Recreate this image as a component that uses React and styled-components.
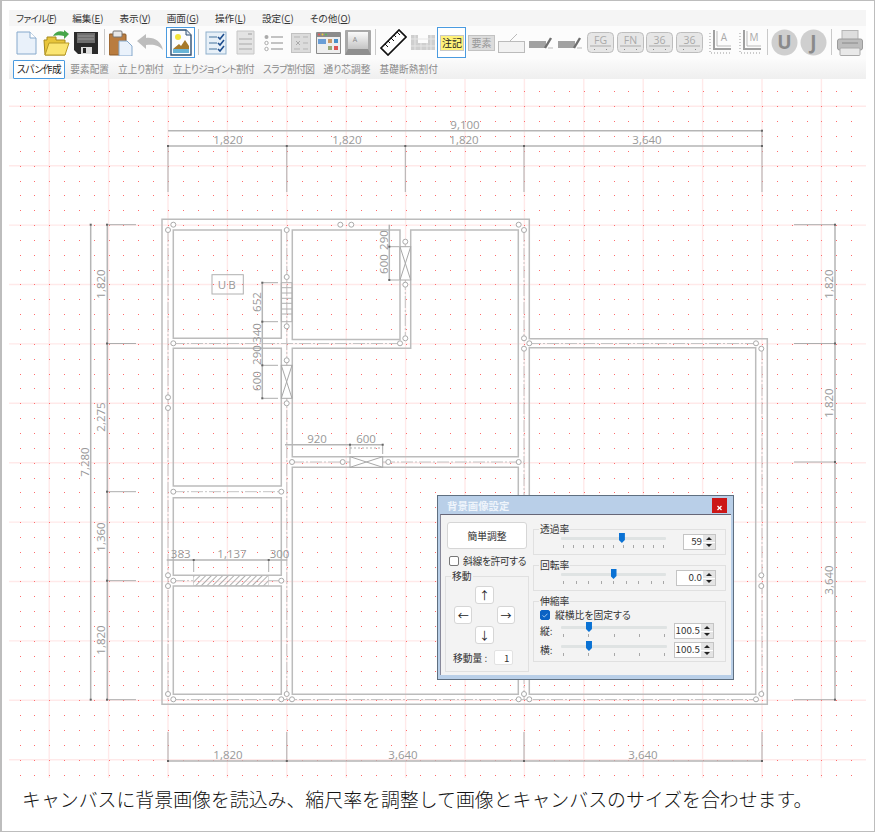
import React from "react";
import styled, { createGlobalStyle } from "styled-components";

const GlobalStyle = createGlobalStyle`
    html, body {
        margin: 0;
        background: #fff;
    }
    body {
        font-family: "Noto Sans CJK JP", "Noto Sans", sans-serif;
        font-feature-settings: "palt";
    }
`;

const Frame = styled.div`
    box-sizing: border-box;
    width: 875px;
    height: 832px;
    padding: 9px 8px 0 7px;
    border: 1px solid #bdbdbd;
    border-left-width: 2px;
    background: #fff;
`;

const MenuBar = styled.div`
    display: flex;
    gap: 16px;
    height: 16px;
    padding-left: 7px;
    align-items: center;
    background: #f5f5f5;
    font-size: 9.6px;
    color: #333;
`;

const MenuItem = styled.span`
    letter-spacing: ${(p) => p.$tight || 0}px;
`;

const ToolBar = styled.div`
    display: flex;
    height: 33px;
    padding-left: 3px;
    background: #fcfcfc;
    overflow: hidden;
`;

const Tool = styled.div`
    box-sizing: border-box;
    flex: 0 0 ${(p) => p.$w}px;
    height: 31px;
    margin-top: 1px;
    display: flex;
    align-items: center;
    justify-content: center;
    border: 1px solid ${(p) => (p.$on ? "#4a9be0" : "transparent")};
    background: ${(p) => (p.$on ? "#fff" : "transparent")};
`;

const Divider = styled.div`
    flex: 0 0 6px;
    display: flex;
    justify-content: center;
    &::before {
        content: "";
        width: 1px;
        height: 26px;
        margin-top: 3px;
        background: #c9c9c9;
    }
`;

const NextIconEdge = styled.div`
    flex: 0 0 2px;
    height: 5px;
    margin-top: 13px;
    background: #4a9be0;
`;

const TabBar = styled.div`
    display: flex;
    gap: 7px;
    height: 20px;
    padding-left: 4px;
    align-items: center;
    background: linear-gradient(#fbfbfb, #efefef);
`;

const Tab = styled.div`
    box-sizing: border-box;
    height: 19px;
    line-height: 17px;
    padding: 0 ${(p) => (p.$active ? 3 : 0)}px;
    margin-right: ${(p) => (p.$active ? -3 : 0)}px;
    font-size: 9.7px;
    letter-spacing: ${(p) => p.$tight || 0}px;
    color: ${(p) => (p.$active ? "#222" : "#8a8a8a")};
    background: ${(p) => (p.$active ? "#fff" : "transparent")};
    border: 1px solid ${(p) => (p.$active ? "#4a9be0" : "transparent")};
    border-radius: 1px;
`;

const Canvas = styled.div`
    position: relative;
    height: 700px;
    background: #fff;
`;

const Drawing = styled.svg`
    display: block;
`;

const DimText = styled.text`
    font-family: "Open Sans", sans-serif;
    font-size: 11.5px;
    fill: #999;
    text-anchor: middle;
`;

const Caption = styled.div`
    padding: 7px 0 0 13px;
    font-size: 18.9px;
    line-height: 26px;
    font-weight: 300;
    font-feature-settings: normal;
    color: #111;
    white-space: nowrap;
`;

const Dialog = styled.div`
    position: absolute;
    left: 428px;
    top: 416px;
    box-sizing: border-box;
    width: 297px;
    height: 185px;
    display: flex;
    flex-direction: column;
    padding: 0 2px 4px 2px;
    border: 1px solid #5f6f80;
    background: #b9cfe8;
    font-size: 9.8px;
    color: #333;
`;

const TitleBar = styled.div`
    display: flex;
    align-items: center;
    justify-content: space-between;
    flex: 0 0 18px;
    padding: 0 4px 0 7px;
    font-size: 10.4px;
    font-weight: 700;
    color: #eef4fb;
`;

const CloseButton = styled.div`
    width: 15px;
    height: 15px;
    display: flex;
    align-items: flex-end;
    justify-content: center;
    background: #cc1616;
`;

const Panel = styled.div`
    flex: 1;
    display: flex;
    gap: 4px;
    padding: 7px 5px 0 4px;
    border-top: 1px solid #667;
    border-left: 1px solid #889;
    background: #f3f3f3;
`;

const LeftColumn = styled.div`
    flex: 0 0 84px;
    display: flex;
    flex-direction: column;
`;

const RightColumn = styled.div`
    flex: 1;
    display: flex;
    flex-direction: column;
    gap: 10px;
    padding-top: 7px;
`;

const PlainButton = styled.div`
    height: 27px;
    margin: 0 2px;
    display: flex;
    align-items: center;
    justify-content: center;
    background: #fff;
    border: 1px solid #d6d6d6;
    border-radius: 3px;
    box-sizing: border-box;
`;

const CheckRow = styled.div`
    display: flex;
    align-items: center;
    gap: ${(p) => p.$gap || 4}px;
    height: 10px;
    margin: ${(p) => p.$margin || "0"};
    letter-spacing: ${(p) => p.$tight || 0}px;
`;

const Check = styled.div`
    box-sizing: border-box;
    width: 10px;
    height: 10px;
    display: flex;
    align-items: center;
    justify-content: center;
    border-radius: 2px;
    border: 1px solid ${(p) => (p.$on ? "#0b62c4" : "#777")};
    background: ${(p) => (p.$on ? "#0b62c4" : "#fff")};
`;

const Group = styled.div`
    position: relative;
    box-sizing: border-box;
    height: ${(p) => p.$h}px;
    margin-top: ${(p) => p.$top || 0}px;
    padding: ${(p) => p.$pad};
    border: 1px solid #e0e0e0;
`;

const Legend = styled.div`
    position: absolute;
    top: -8px;
    left: 5px;
    padding: 0 1px;
    line-height: 14px;
    background: #f3f3f3;
`;

const ArrowPad = styled.div`
    display: grid;
    grid-template-columns: repeat(3, 18.4px);
    grid-template-rows: repeat(3, 18px);
    gap: 2px 3px;
    margin: 9px 0 0 8px;
    grid-template-areas:
        ". up ."
        "left . right"
        ". down .";
`;

const ArrowButton = styled.div`
    grid-area: ${(p) => p.$area};
    display: flex;
    align-items: center;
    justify-content: center;
    background: #fff;
    border: 1px solid #d6d6d6;
    border-radius: 3px;
    font-size: 11px;
    color: #222;
`;

const StepRow = styled.div`
    display: flex;
    align-items: center;
    gap: 7px;
    margin: 6px 0 0 7px;
`;

const StepInput = styled.div`
    box-sizing: border-box;
    width: 19px;
    height: 15px;
    line-height: 14px;
    padding-right: 3px;
    text-align: right;
    background: #fff;
    border: 1px solid #e2e2e2;
    border-radius: 2px;
`;

const SliderRow = styled.div`
    display: flex;
    align-items: flex-start;
    margin-top: ${(p) => p.$top || 0}px;
`;

const RowLabel = styled.div`
    flex: 0 0 21px;
    line-height: 16px;
`;

const Slider = styled.div`
    width: ${(p) => p.$w}px;
    margin-top: 3px;
`;

const Track = styled.div`
    position: relative;
    height: 3px;
    background: #dfe3e3;
    border-radius: 1px;
`;

const Thumb = styled.div`
    position: absolute;
    top: -4px;
    left: ${(p) => p.$at}%;
    width: 6px;
    height: 10px;
    margin-left: -3px;
    background: #0a72d4;
    clip-path: polygon(0 0, 100% 0, 100% 70%, 50% 100%, 0 70%);
`;

const Ticks = styled.div`
    display: flex;
    justify-content: space-between;
    margin: 5px 2px 0;
`;

const Tick = styled.span`
    width: 1px;
    height: 3px;
    background: #a8a8a8;
`;

const Spin = styled.div`
    box-sizing: border-box;
    flex: 0 0 auto;
    width: ${(p) => p.$w}px;
    height: 16px;
    margin-left: auto;
    display: flex;
    background: #fff;
    border: 1px solid #c4c4c4;
`;

const SpinValue = styled.div`
    flex: 1;
    text-align: right;
    padding-right: 1px;
    line-height: 13px;
`;

const SpinButtons = styled.div`
    flex: 0 0 12px;
    display: flex;
    flex-direction: column;
    gap: 1px;
`;

const SpinButton = styled.div`
    flex: 1;
    display: flex;
    align-items: center;
    justify-content: center;
    background: #e4e4e4;
    &::before {
        content: "";
        border-left: 3px solid transparent;
        border-right: 3px solid transparent;
        border-${(p) => (p.$down ? "top" : "bottom")}: 3px solid #222;
    }
`;

// canvas geometry, page coordinates
const GRID_X = Array.from({ length: 14 }, (_, i) => 49.2 + i * 59.4);
const GRID_Y = Array.from({ length: 12 }, (_, i) => 106.3 + i * 59.4);

const dotPath = () => {
    let d = "";
    for (let i = 0; i < 58; i++) {
        for (let j = 0; j < 47; j++) {
            const x = Math.round(19.5 + i * 14.85);
            const y = Math.round(91.4 + j * 14.85);
            if (x < 866 && y < 776) d += `M${x} ${y}h1v1h-1z`;
        }
    }
    return d;
};

const WALLS = [
    "M162 219.3H529.3V338.7H767.3V704.3H162Z",
    "M173.3 230H281.3V338.3H173.3Z",
    "M292.3 230H400V339.5H292.3Z",
    "M410.7 230H518.3V456.7H292.3V348.3H410.7Z",
    "M173.3 348.3H281.3V486H173.3Z",
    "M173.3 497.7H281.3V575.3H173.3Z",
    "M173.3 586H281.3V694.3H173.3Z",
    "M292.3 467.3H518.3V694.3H292.3Z",
    "M529.3 347.7H755.7V694.3H529.3Z",
];

const CHAINS = [
    "M168 230V700", "M286.8 230V700", "M524 230V338", "M524 348V700", "M405.3 242V338",
    "M762 348V694", "M173 343.5H400", "M292 462H350", "M383 462H524", "M173 491.7H281",
    "M173 580.7H193", "M269 580.7H281", "M529 343.5H756", "M173 699.5H756",
];

const NODES = [
    [173.3, 224.7], [168, 230], [286.7, 230], [340.3, 224.7], [351.3, 224.7], [405.3, 241.7], [405.3, 284.7],
    [286.7, 277], [286.7, 326.3], [405.3, 338.3], [400, 343.3], [173.3, 343.3], [168, 397.3], [168, 408],
    [286.7, 360.3], [286.7, 403.3], [292, 462], [342.7, 462], [388.3, 462], [173.3, 491.7], [281.3, 491.7],
    [168, 575.3], [168, 586], [173.3, 580.7], [281.3, 580.7], [168, 694], [286.7, 694], [173.3, 699.3],
    [281.3, 699.3], [292, 699.3], [518.7, 224.7], [524, 230], [524, 338.3], [529.3, 343.3], [524, 348.7],
    [756, 343.3], [761.3, 348.7], [518.7, 462], [761.3, 575.3], [761.3, 586], [524, 694], [518.7, 699.3],
    [529.3, 699.3], [756, 699.3], [761.3, 694],
];

const DIM_BARS = [
    "M168 130.7H762", "M168 146H762", "M168 761H762", "M90.7 224.7V700", "M107.3 224.7V700", "M835 224.7V700",
    "M166.7 560H287.3", "M285 444.7H382.7", "M262.3 282.7V398.3", "M389.3 224.7V280",
];

const DIM_TICKS = [
    "M168 146V192", "M286.8 146V192", "M405.3 146V192", "M524 146V192", "M762 130.7V192",
    "M168 732V761", "M286.8 732V761", "M524 732V761", "M762 732V761",
    "M107 224.7H136", "M107 343.5H136", "M107 491.7H136", "M107 580.7H136", "M107 699.7H136",
    "M794 224.7H835", "M794 343.5H835", "M794 462H835", "M794 699.7H835",
    "M193.7 560V572", "M268.7 560V572", "M350 444.7V454", "M382.7 444.7V454",
    "M262.3 282.7H278", "M262.3 321.7H278", "M262.3 365.3H278", "M262.3 398.3H278",
    "M389.3 246.7H399", "M389.3 280H399",
];

const DIM_ENDS = [
    [168, 146], [286.8, 146], [405.3, 146], [524, 146], [762, 146], [762, 130.7], [107, 224.7], [107, 343.5],
    [107, 491.7], [107, 580.7], [107, 699.7], [835, 224.7], [835, 343.5], [835, 462], [835, 699.7], [193.7, 560],
    [268.7, 560], [350, 444.7], [382.7, 444.7], [262.3, 282.7], [262.3, 321.7], [262.3, 365.3], [262.3, 398.3],
    [389.3, 246.7], [389.3, 280], [168, 761], [286.8, 761], [524, 761], [762, 761], [90.7, 699.7], [90.7, 224.7],
];

const H_LABELS = [
    ["9,100", 465, 129], ["1,820", 228, 144], ["1,820", 347, 144], ["1,820", 464, 144], ["3,640", 647, 144],
    ["1,820", 228, 759], ["3,640", 403, 759], ["3,640", 643, 759], ["920", 317, 443], ["600", 366, 443],
    ["383", 180.7, 558], ["1,137", 232, 558], ["300", 279.5, 558],
];

const V_LABELS = [
    ["7,280", 89, 462], ["1,820", 105, 284], ["2,275", 105, 417], ["1,360", 105, 537], ["1,820", 105, 640],
    ["1,820", 833, 284], ["1,820", 833, 403], ["3,640", 833, 580], ["652", 261, 302], ["340", 261, 333],
    ["290", 261, 355], ["600", 261, 381], ["290", 388, 240], ["600", 388, 264],
];

const Door = ({ x, y, w, h }) => (
    <g fill="#fff" stroke="#a8a8a8" strokeWidth="1">
        <rect x={x} y={y} width={w} height={h} />
        <path d={`M${x} ${y}L${x + w} ${y + h}M${x + w} ${y}L${x} ${y + h}`} fill="none" />
    </g>
);

const PlanDrawing = () => (
    <Drawing width="857" height="700" viewBox="9 79 857 700">
        <defs>
            <pattern id="hatch" width="4" height="4" patternUnits="userSpaceOnUse" patternTransform="rotate(-45)">
                <rect width="4" height="1" fill="#b0b0b0" />
            </pattern>
        </defs>
        <g stroke="#ffe9e9" strokeWidth="1.4">
            {GRID_X.map((x) => <path key={x} d={`M${x} 79V778`} />)}
            {GRID_Y.map((y) => <path key={y} d={`M9 ${y}H866`} />)}
        </g>
        <path d={dotPath()} fill="#ff6b6b" />
        <g fill="none" stroke="#bcbcbc" strokeWidth="1.5">
            {WALLS.map((d) => <path key={d} d={d} />)}
        </g>
        <g fill="none" stroke="#c4c4c4" strokeWidth="1" strokeDasharray="12 2 2 2">
            {CHAINS.map((d) => <path key={d} d={d} />)}
        </g>
        <g fill="none" stroke="#b0b0b0" strokeWidth="1">
            <path d="M281.3 282.7H292V321.7H281.3ZM281.3 287.7H292M281.3 293H292M281.3 298.3H292M281.3 303.3H292M281.3 309H292M281.3 314H292" />
            <rect x="212" y="274.7" width="31.3" height="19.3" />
            <path d="M350 448H382.7" strokeDasharray="2 2" />
        </g>
        <Door x={400} y={246.7} w={10.7} h={33.3} />
        <Door x={281.3} y={365.3} w={10.7} h={33} />
        <Door x={350} y={456.7} w={32.7} h={10.6} />
        <rect x="193.3" y="575.7" width="75.4" height="10" fill="url(#hatch)" stroke="#bbb" strokeWidth="0.5" />
        <g fill="#fff" stroke="#aaa" strokeWidth="1">
            {NODES.map(([x, y]) => <circle key={`${x}-${y}`} cx={x} cy={y} r="2.5" />)}
        </g>
        <g fill="none" stroke="#b5b5b5" strokeWidth="1.5">
            {DIM_BARS.map((d) => <path key={d} d={d} />)}
        </g>
        <g fill="none" stroke="#adadad" strokeWidth="1">
            {DIM_TICKS.map((d) => <path key={d} d={d} />)}
        </g>
        <g fill="#666">
            {DIM_ENDS.map(([x, y]) => <rect key={`${x}-${y}`} x={x - 1} y={y - 1} width="2" height="2" />)}
        </g>
        {H_LABELS.map(([t, x, y]) => <DimText key={`${t}-${x}-${y}`} x={x} y={y}>{t}</DimText>)}
        {V_LABELS.map(([t, x, y]) => (
            <DimText key={`${t}-${x}-${y}`} x={x} y={y} transform={`rotate(-90 ${x} ${y})`}>{t}</DimText>
        ))}
        <DimText x="227.7" y="288.5" letterSpacing="2">UB</DimText>
    </Drawing>
);

// toolbar icons
const NewDoc = () => (
    <svg width="21" height="24" viewBox="0 0 21 24">
        <path d="M1 1H14L20 7V23H1Z" fill="#e9f1fa" stroke="#86a9cc" />
        <path d="M14 1V7H20" fill="#fff" stroke="#86a9cc" />
    </svg>
);

const OpenFolder = () => (
    <svg width="27" height="26" viewBox="0 0 27 26">
        <path d="M2 25L1 10H4V7H13V10H22V25Z" fill="#e8c53a" stroke="#a58a1e" />
        <path d="M2 25L6 13H26L22 25Z" fill="#fbe572" stroke="#b89a28" />
        <path d="M10 6C12 2 17 0 21 2V0L26 4L21 9V6C17 5 14 5 10 6Z" fill="#47a64a" />
    </svg>
);

const SaveDisk = () => (
    <svg width="25" height="24" viewBox="0 0 25 24">
        <path d="M0 1H24V23H4L0 19Z" fill="#2b2b2b" />
        <rect x="3" y="2" width="18" height="10" fill="#6e6e6e" />
        <path d="M4 5H20M4 8H20" stroke="#999" />
        <rect x="7" y="16" width="11" height="7" fill="#ddd" />
        <rect x="9" y="17" width="3" height="5" fill="#222" />
    </svg>
);

const PasteIcon = () => (
    <svg width="24" height="26" viewBox="0 0 24 26">
        <rect x="0" y="4" width="17" height="21" rx="1" fill="#b97c3f" stroke="#8a5a2b" />
        <rect x="4" y="1" width="9" height="6" rx="1" fill="#e8e8e8" stroke="#777" />
        <path d="M10 11H18L23 16V26H10Z" fill="#eaf2fb" stroke="#86a9cc" />
    </svg>
);

const UndoIcon = () => (
    <svg width="27" height="17" viewBox="0 0 27 17">
        <path d="M0 7L9 0V4C17 3 24 7 26 16C22 11 16 10 9 11V15Z" fill="#bdbdbd" />
    </svg>
);

const BgImageIcon = () => (
    <svg width="22" height="27" viewBox="0 0 22 27">
        <path d="M1 1H16L21 6V26H1Z" fill="#fbfdff" stroke="#2e4f73" strokeWidth="1.4" />
        <path d="M16 1V6H21" fill="#dfe8f2" stroke="#2e4f73" />
        <circle cx="8" cy="8" r="3" fill="#f3e43a" />
        <path d="M3 20L9 15L11 17L15 11L19 17V20Z" fill="#a67a2c" />
        <rect x="3" y="20" width="16" height="4" fill="#69b4d6" />
    </svg>
);

const CheckDoc = () => (
    <svg width="22" height="24" viewBox="0 0 22 24">
        <rect x="1" y="1" width="20" height="22" fill="#e7f0f8" stroke="#8fb0cc" />
        <path d="M4 6H12M4 12H12M4 18H12" stroke="#7b9cba" strokeWidth="1.4" />
        <path d="M13 6L15 8L19 3M13 12L15 14L19 9M13 18L15 20L19 15" fill="none" stroke="#1f4f8f" strokeWidth="1.6" />
    </svg>
);

const GrayDoc = () => (
    <svg width="19" height="25" viewBox="0 0 19 25">
        <path d="M1 1H18V24H1Z" fill="#e3e3e3" stroke="#c6c6c6" />
        <path d="M3 9H16M3 14H16M3 19H16" stroke="#bdbdbd" strokeWidth="1.4" />
        <rect x="12" y="3" width="4" height="2" fill="#c0c0c0" />
    </svg>
);

const ListIcon = () => (
    <svg width="20" height="18" viewBox="0 0 20 18">
        <circle cx="2.5" cy="3" r="2" fill="#aaa" />
        <circle cx="2.5" cy="9" r="1.7" fill="#fff" stroke="#aaa" />
        <circle cx="2.5" cy="15" r="1.7" fill="#fff" stroke="#aaa" />
        <path d="M7 3H19M7 9H19M7 15H19" stroke="#b0b0b0" strokeWidth="1.6" />
    </svg>
);

const FormIcon = () => (
    <svg width="20" height="20" viewBox="0 0 20 20">
        <rect x="0.5" y="0.5" width="19" height="19" fill="#dcdcdc" stroke="#c2c2c2" />
        <path d="M3 4H9M12 4H17M3 16H9M12 16H17M12 10H17" stroke="#b5b5b5" />
        <path d="M5 8L9 12M9 8L5 12" stroke="#aaa" />
    </svg>
);

const WindowIcon = () => (
    <svg width="25" height="22" viewBox="0 0 25 22">
        <rect width="25" height="22" rx="1" fill="#8b8b8b" />
        <rect x="1" y="5" width="23" height="16" fill="#eee" />
        <circle cx="3" cy="2.5" r="1" fill="#e55" />
        <circle cx="6.5" cy="2.5" r="1" fill="#ec3" />
        <circle cx="10" cy="2.5" r="1" fill="#5b5" />
        <rect x="2" y="7" width="8" height="5" fill="#6a9ed6" />
        <rect x="12" y="7" width="4" height="4" fill="#c96" />
        <rect x="18" y="7" width="4" height="4" fill="#4a90c8" />
        <rect x="12" y="14" width="4" height="4" fill="#9a7" />
        <rect x="18" y="14" width="4" height="4" fill="#d55" />
    </svg>
);

const KeyIcon = () => (
    <svg width="26" height="25" viewBox="0 0 26 25">
        <defs>
            <linearGradient id="keyTop" x1="0" y1="0" x2="0" y2="1">
                <stop offset="0" stopColor="#fafafa" />
                <stop offset="1" stopColor="#c4c4c4" />
            </linearGradient>
        </defs>
        <rect width="26" height="25" rx="1" fill="#a8a8a8" />
        <rect x="3" y="2" width="20" height="17" fill="url(#keyTop)" />
        <path d="M0 25L3 19H23L26 25Z" fill="#8f8f8f" />
        <text x="10" y="12" fontSize="7" fill="#888" textAnchor="middle" fontFamily="Open Sans">A</text>
    </svg>
);

const RulerIcon = () => (
    <svg width="27" height="27" viewBox="0 0 27 27">
        <path d="M1 19L19 1L26 8L8 26Z" fill="#fff" stroke="#111" strokeWidth="1.7" />
        <path d="M5 15L8 18M8 12L10 14M11 9L14 12M14 6L16 8M17 3L20 6" stroke="#111" />
    </svg>
);

const CombIcon = () => (
    <svg width="24" height="15" viewBox="0 0 24 15">
        <path d="M0 0H7V8H17V0H24V15H0Z" fill="#cfcfcf" />
        <path d="M0 4H24M0 11H24M4 0V15M10 8V15M16 8V15M20 0V15" stroke="#e6e6e6" />
    </svg>
);

const StampIcon = ({ w, bg, line, color, children }) => (
    <svg width={w} height="16" viewBox={`0 0 ${w} 16`}>
        <rect x="0.5" y="0.5" width={w - 1} height="15" fill={bg} stroke={line} />
        <text x={w / 2} y="12" fontSize="10" fill={color} textAnchor="middle">{children}</text>
    </svg>
);

const RectIcon = () => (
    <svg width="27" height="20" viewBox="0 0 27 20">
        <rect x="0.5" y="8.5" width="26" height="11" fill="#f2f2f2" stroke="#bbb" />
        <path d="M12 8L19 1" stroke="#bbb" />
    </svg>
);

const PenIcon = () => (
    <svg width="25" height="13" viewBox="0 0 25 13">
        <rect x="0" y="5" width="17" height="7" fill="#a2a2a2" />
        <path d="M16 12L22 2" stroke="#6f6f6f" strokeWidth="2.4" />
        <path d="M19 12H24" stroke="#bbb" />
    </svg>
);

const PlateIcon = ({ label }) => (
    <svg width="27" height="21" viewBox="0 0 27 21">
        <rect x="0.5" y="0.5" width="26" height="20" rx="4" fill="#e6e6e6" stroke="#bdbdbd" />
        <text x="13.5" y="11.5" fontSize="10.5" fill="#aaa" textAnchor="middle" fontFamily="Open Sans">{label}</text>
        <path d="M3 14H24" stroke="#aaa" />
        <path d="M7 17h1v1h-1zM19 17h1v1h-1z" fill="#888" />
    </svg>
);

const CornerIcon = ({ label }) => (
    <svg width="25" height="25" viewBox="0 0 25 25">
        <path d="M7 0V19H24" fill="none" stroke="#a0a0a0" strokeWidth="2" />
        <path d="M10 1V16H24" fill="none" stroke="#bbb" />
        <path d="M3 3V23H24" fill="none" stroke="#999" strokeDasharray="1 2" />
        <text x="17" y="11" fontSize="10" fill="#aaa" textAnchor="middle" fontFamily="Open Sans">{label}</text>
    </svg>
);

const BadgeIcon = ({ label }) => (
    <svg width="27" height="27" viewBox="0 0 27 27">
        <circle cx="13.5" cy="13.5" r="13" fill="#cfcfcf" />
        <text x="13.5" y="20" fontSize="19" fontWeight="700" fill="#8a8a8a" textAnchor="middle" fontFamily="Open Sans">{label}</text>
    </svg>
);

const PrinterIcon = () => (
    <svg width="26" height="26" viewBox="0 0 26 26">
        <rect x="5" y="0.5" width="16" height="10" fill="#dedede" stroke="#b5b5b5" />
        <rect x="0.5" y="9" width="25" height="11" rx="2" fill="#bdbdbd" stroke="#9c9c9c" />
        <rect x="3" y="18" width="20" height="7.5" rx="1" fill="#e9e9e9" stroke="#aaa" />
        <path d="M5 13H21" stroke="#8a8a8a" />
    </svg>
);

const MENUS = [
    ["ファイル", "F", -0.7], ["編集", "E"], ["表示", "V"], ["画面", "G"], ["操作", "L"], ["設定", "C"], ["その他", "O"],
];

const TABS = [
    ["要素配置", 0], ["立上り割付", -0.2], ["立上りジョイント割付", -0.7],
    ["スラブ割付図", -0.5], ["通り芯調整", 0], ["基礎断熱割付", 0.1],
];

const SliderControl = ({ w, at, ticks }) => (
    <Slider $w={w}>
        <Track><Thumb $at={at} /></Track>
        <Ticks>{Array.from({ length: ticks }, (_, i) => <Tick key={i} />)}</Ticks>
    </Slider>
);

const SpinControl = ({ w, value }) => (
    <Spin $w={w}>
        <SpinValue>{value}</SpinValue>
        <SpinButtons>
            <SpinButton />
            <SpinButton $down />
        </SpinButtons>
    </Spin>
);

export default function App() {
    return (
        <Frame>
            <GlobalStyle />
            <MenuBar>
                {MENUS.map(([name, key, tight]) => (
                    <MenuItem key={key} $tight={tight}>{name}(<u>{key}</u>)</MenuItem>
                ))}
            </MenuBar>
            <ToolBar>
                <Tool $w={28}><NewDoc /></Tool>
                <Tool $w={32}><OpenFolder /></Tool>
                <Tool $w={29}><SaveDisk /></Tool>
                <Divider />
                <Tool $w={28}><PasteIcon /></Tool>
                <Tool $w={31}><UndoIcon /></Tool>
                <Tool $w={29} $on><BgImageIcon /></Tool>
                <Divider />
                <Tool $w={30}><CheckDoc /></Tool>
                <Tool $w={28}><GrayDoc /></Tool>
                <Tool $w={29}><ListIcon /></Tool>
                <Tool $w={26}><FormIcon /></Tool>
                <Tool $w={29}><WindowIcon /></Tool>
                <Tool $w={29}><KeyIcon /></Tool>
                <Divider />
                <Tool $w={30}><RulerIcon /></Tool>
                <Tool $w={29}><CombIcon /></Tool>
                <Tool $w={29} $on><StampIcon w={24} bg="#fff27a" line="#c9c9c9" color="#222">注記</StampIcon></Tool>
                <Tool $w={31}><StampIcon w={27} bg="#dcdcdc" line="#c2c2c2" color="#999">要素</StampIcon></Tool>
                <Tool $w={29}><RectIcon /></Tool>
                <Tool $w={30}><PenIcon /></Tool>
                <Tool $w={29}><PenIcon /></Tool>
                <Tool $w={30}><PlateIcon label="FG" /></Tool>
                <Tool $w={30}><PlateIcon label="FN" /></Tool>
                <Tool $w={29}><PlateIcon label="36" /></Tool>
                <Tool $w={30}><PlateIcon label="36" /></Tool>
                <Tool $w={31}><CornerIcon label="A" /></Tool>
                <Tool $w={29}><CornerIcon label="M" /></Tool>
                <Divider />
                <Tool $w={28}><BadgeIcon label="U" /></Tool>
                <Tool $w={29}><BadgeIcon label="J" /></Tool>
                <Divider />
                <Tool $w={32}><PrinterIcon /></Tool>
                <NextIconEdge />
            </ToolBar>
            <TabBar>
                <Tab $active $tight={-0.4}>スパン作成</Tab>
                {TABS.map(([name, tight]) => <Tab key={name} $tight={tight}>{name}</Tab>)}
            </TabBar>
            <Canvas>
                <PlanDrawing />
                <Dialog>
                    <TitleBar>
                        背景画像設定
                        <CloseButton>
                            <svg width="5" height="8" viewBox="0 0 5 8">
                                <path d="M0.5 1L4.5 5M4.5 1L0.5 5" stroke="#fff" strokeWidth="1.3" />
                            </svg>
                        </CloseButton>
                    </TitleBar>
                    <Panel>
                        <LeftColumn>
                            <PlainButton>簡単調整</PlainButton>
                            <CheckRow $margin="7px 0 0 4px" $tight={-0.4}><Check />斜線を許可する</CheckRow>
                            <Group $h={96} $top={10} $pad="0">
                                <Legend>移動</Legend>
                                <ArrowPad>
                                    <ArrowButton $area="up">↑</ArrowButton>
                                    <ArrowButton $area="left">←</ArrowButton>
                                    <ArrowButton $area="right">→</ArrowButton>
                                    <ArrowButton $area="down">↓</ArrowButton>
                                </ArrowPad>
                                <StepRow>
                                    移動量 :
                                    <StepInput>1</StepInput>
                                </StepRow>
                            </Group>
                        </LeftColumn>
                        <RightColumn>
                            <Group $h={26} $pad="4px 9px 0 27px">
                                <Legend>透過率</Legend>
                                <SliderRow>
                                    <SliderControl w={105} at={58} ticks={11} />
                                    <SpinControl w={33} value="59" />
                                </SliderRow>
                            </Group>
                            <Group $h={26} $pad="4px 9px 0 27px">
                                <Legend>回転率</Legend>
                                <SliderRow>
                                    <SliderControl w={105} at={50} ticks={9} />
                                    <SpinControl w={40} value="0.0" />
                                </SliderRow>
                            </Group>
                            <Group $h={61} $pad="8px 11px 0 6px">
                                <Legend>伸縮率</Legend>
                                <CheckRow $gap={5}>
                                    <Check $on>
                                        <svg width="6" height="5" viewBox="0 0 6 5">
                                            <path d="M0.5 2.5L2.3 4L5.5 0.7" fill="none" stroke="#9cc4ee" />
                                        </svg>
                                    </Check>
                                    縦横比を固定する
                                </CheckRow>
                                <SliderRow $top={3}>
                                    <RowLabel>縦:</RowLabel>
                                    <SliderControl w={106} at={26.4} ticks={5} />
                                    <SpinControl w={40} value="100.5" />
                                </SliderRow>
                                <SliderRow $top={3}>
                                    <RowLabel>横:</RowLabel>
                                    <SliderControl w={106} at={26.4} ticks={5} />
                                    <SpinControl w={40} value="100.5" />
                                </SliderRow>
                            </Group>
                        </RightColumn>
                    </Panel>
                </Dialog>
            </Canvas>
            <Caption>キャンバスに背景画像を読込み、縮尺率を調整して画像とキャンバスのサイズを合わせます。</Caption>
        </Frame>
    );
}
